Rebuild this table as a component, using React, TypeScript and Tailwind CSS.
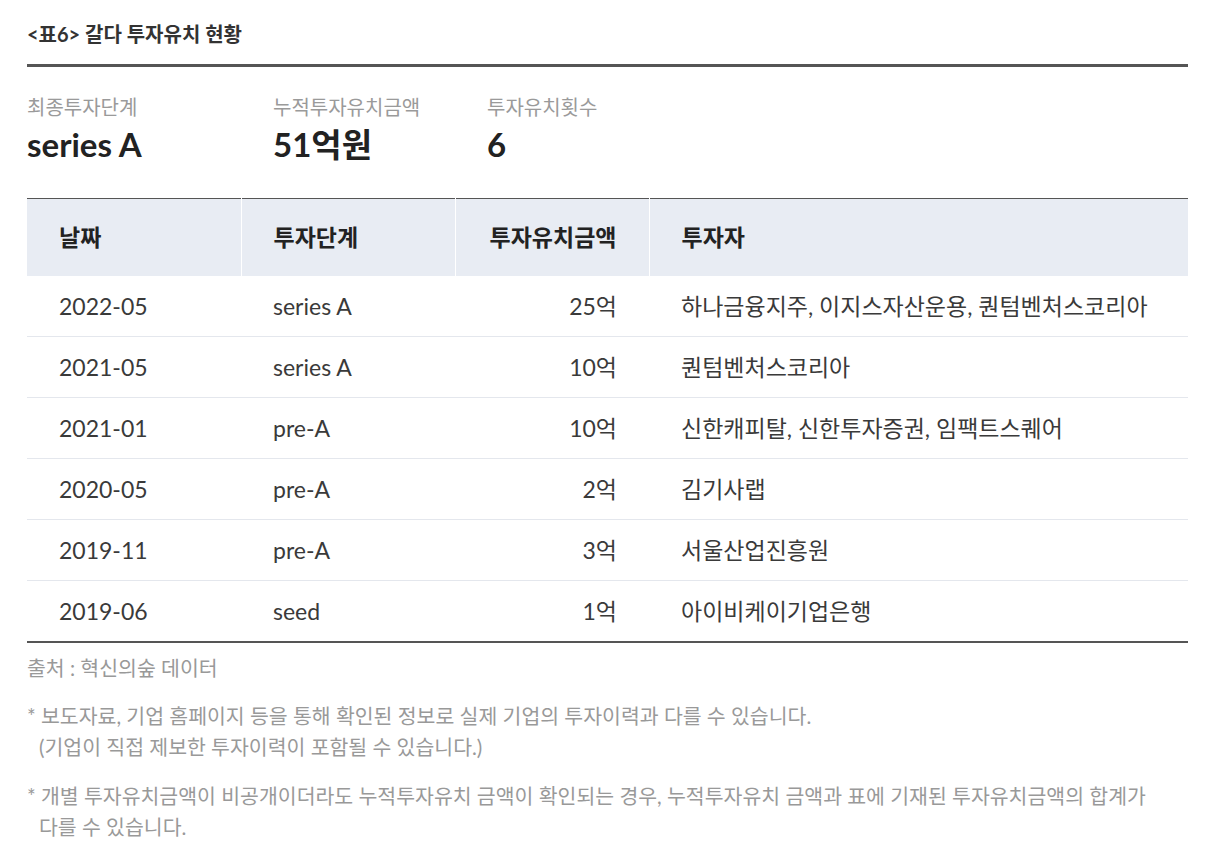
const rows = [
  { date: "2022-05", stage: "series A", amount: "25억", investors: "하나금융지주, 이지스자산운용, 퀀텀벤처스코리아" },
  { date: "2021-05", stage: "series A", amount: "10억", investors: "퀀텀벤처스코리아" },
  { date: "2021-01", stage: "pre-A", amount: "10억", investors: "신한캐피탈, 신한투자증권, 임팩트스퀘어" },
  { date: "2020-05", stage: "pre-A", amount: "2억", investors: "김기사랩" },
  { date: "2019-11", stage: "pre-A", amount: "3억", investors: "서울산업진흥원" },
  { date: "2019-06", stage: "seed", amount: "1억", investors: "아이비케이기업은행" },
];

const stats = [
  { label: "최종투자단계", value: "series A", width: "w-[246px]" },
  { label: "누적투자유치금액", value: "51억원", width: "w-[214px]" },
  { label: "투자유치횟수", value: "6", width: "w-[200px]" },
];

export default function App() {
  return (
    <div className="min-h-screen bg-white font-['Lato','Noto_Sans_CJK_KR',sans-serif] text-[#333]">
      <div className="ml-[27px] w-[1161px] pt-[21px]">
        <h2 className="pb-[16px] text-[20px] font-bold leading-[27px] text-[#333]">&lt;표6&gt; 갈다 투자유치 현황</h2>
        <div className="h-[3px] bg-[#555]" />

        <div className="flex pt-[26px] pb-[33px]">
          {stats.map((s) => (
            <div key={s.label} className={s.width}>
              <div className="text-[20px] leading-[28px] text-[#9a9a9a]">{s.label}</div>
              <div className="mt-[2px] text-[33px] font-bold leading-[42px] text-[#222]">{s.value}</div>
            </div>
          ))}
        </div>

        <table className="w-full border-collapse border-t border-t-[#555] border-b-2 border-b-[#555]">
          <thead>
            <tr className="h-[77px] bg-[#e8ecf3] text-[23px] font-bold text-[#222]">
              <th className="w-[214px] pl-[32px] text-left">날짜</th>
              <th className="w-[214px] border-l border-white pl-[32px] text-left">투자단계</th>
              <th className="w-[194px] border-l border-white pr-[32px] text-right">투자유치금액</th>
              <th className="border-l border-white pl-[32px] text-left">투자자</th>
            </tr>
          </thead>
          <tbody className="text-[23px] text-[#3a3a3a]">
            {rows.map((r, i) => (
              <tr key={r.date + r.stage} className={`h-[61px] ${i < rows.length - 1 ? "border-b border-[#e4e7ed]" : ""}`}>
                <td className="pl-[32px]">{r.date}</td>
                <td className="pl-[32px]">{r.stage}</td>
                <td className="pr-[32px] text-right">{r.amount}</td>
                <td className="pl-[32px]">{r.investors}</td>
              </tr>
            ))}
          </tbody>
        </table>

        <p className="mt-[11px] text-[20.5px] leading-[28px] text-[#999]">출처 : 혁신의숲 데이터</p>

        <div className="mt-[19px] whitespace-nowrap text-[20.5px] leading-[31px] text-[#999]">
          <p>* 보도자료, 기업 홈페이지 등을 통해 확인된 정보로 실제 기업의 투자이력과 다를 수 있습니다.</p>
          <p className="pl-[12px]">(기업이 직접 제보한 투자이력이 포함될 수 있습니다.)</p>
          <p className="mt-[18px]">* 개별 투자유치금액이 비공개이더라도 누적투자유치 금액이 확인되는 경우, 누적투자유치 금액과 표에 기재된 투자유치금액의 합계가</p>
          <p className="pl-[12px]">다를 수 있습니다.</p>
        </div>
      </div>
    </div>
  );
}
